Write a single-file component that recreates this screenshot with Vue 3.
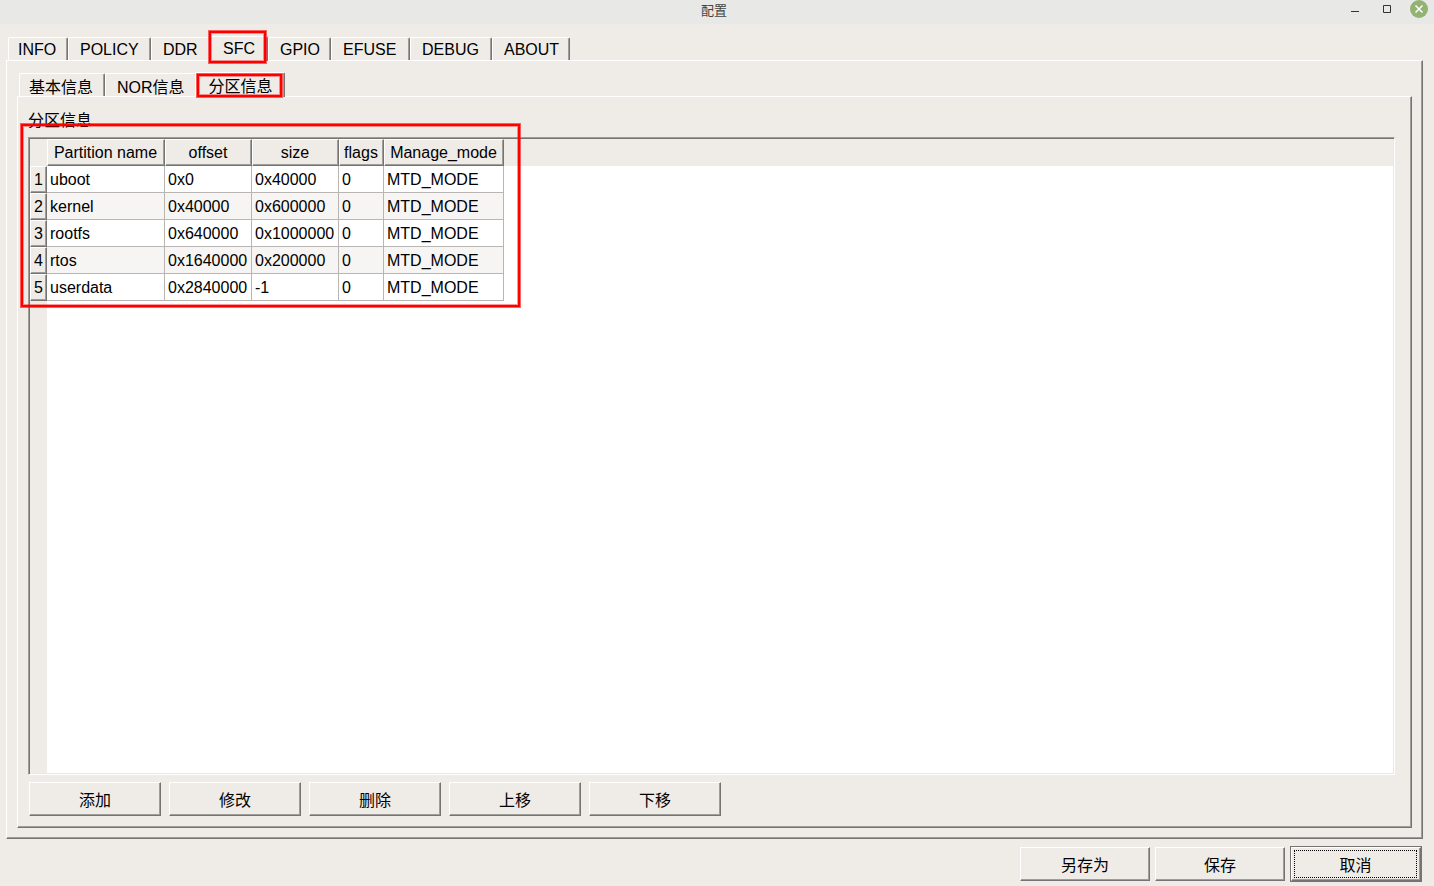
<script setup>
import { ref } from 'vue'

const tabs = [
  { label: 'INFO', width: 60 },
  { label: 'POLICY', width: 83 },
  { label: 'DDR', width: 60 },
  { label: 'SFC', width: 59 },
  { label: 'GPIO', width: 63 },
  { label: 'EFUSE', width: 79 },
  { label: 'DEBUG', width: 82 },
  { label: 'ABOUT', width: 78 },
]
const subTabs = ['基本信息', 'NOR信息', '分区信息']
const activeTab = ref('SFC')
const activeSub = ref('分区信息')

const columns = [
  { key: 'name', label: 'Partition name' },
  { key: 'offset', label: 'offset' },
  { key: 'size', label: 'size' },
  { key: 'flags', label: 'flags' },
  { key: 'mode', label: 'Manage_mode' },
]
const rows = [
  { name: 'uboot', offset: '0x0', size: '0x40000', flags: '0', mode: 'MTD_MODE' },
  { name: 'kernel', offset: '0x40000', size: '0x600000', flags: '0', mode: 'MTD_MODE' },
  { name: 'rootfs', offset: '0x640000', size: '0x1000000', flags: '0', mode: 'MTD_MODE' },
  { name: 'rtos', offset: '0x1640000', size: '0x200000', flags: '0', mode: 'MTD_MODE' },
  { name: 'userdata', offset: '0x2840000', size: '-1', flags: '0', mode: 'MTD_MODE' },
]
const actions = ['添加', '修改', '删除', '上移', '下移']
</script>

<template>
  <div class="window">
    <header class="titlebar">
      <h1 class="title">配置</h1>
      <div class="controls">
        <button class="control" type="button" aria-label="最小化">
          <svg width="18" height="18" viewBox="0 0 18 18"><path d="M5 11.5h8" stroke="#333" fill="none" /></svg>
        </button>
        <button class="control" type="button" aria-label="最大化">
          <svg width="18" height="18" viewBox="0 0 18 18"><path d="M5.5 5.5h7v7h-7z" stroke="#333" fill="none" /></svg>
        </button>
        <button class="control" type="button" aria-label="关闭">
          <svg width="18" height="18" viewBox="0 0 18 18">
            <circle cx="9" cy="9" r="9" fill="#92b372" />
            <path d="M5.5 5.5l7 7M12.5 5.5l-7 7" stroke="#fff" stroke-width="1.5" fill="none" />
          </svg>
        </button>
      </div>
    </header>

    <main class="body">
      <div class="tabs" role="tablist">
        <button
          v-for="t in tabs"
          :key="t.label"
          type="button"
          role="tab"
          class="tab"
          :class="{ active: t.label === activeTab }"
          :style="{ width: t.width + 'px' }"
          :aria-selected="t.label === activeTab"
          @click="activeTab = t.label"
        >{{ t.label }}<span v-if="t.label === 'SFC'" class="mark mark-tab"></span></button>
      </div>

      <section class="pane outer">
        <div class="tabs sub" role="tablist">
          <button
            v-for="t in subTabs"
            :key="t"
            type="button"
            role="tab"
            class="tab"
            :class="{ active: t === activeSub }"
            :aria-selected="t === activeSub"
            @click="activeSub = t"
          >{{ t }}<span v-if="t === '分区信息'" class="mark mark-sub"></span></button>
        </div>

        <section class="pane inner">
          <h2 id="partition-label" class="group-label">分区信息</h2>
          <div class="frame">
            <div class="viewport">
              <table class="grid" aria-labelledby="partition-label">
                <colgroup>
                  <col class="col-index" />
                  <col v-for="c in columns" :key="c.key" :class="'col-' + c.key" />
                </colgroup>
                <thead>
                  <tr>
                    <td class="corner"></td>
                    <th v-for="c in columns" :key="c.key" scope="col">{{ c.label }}</th>
                  </tr>
                </thead>
                <tbody>
                  <tr v-for="(r, i) in rows" :key="r.name">
                    <th scope="row">{{ i + 1 }}</th>
                    <td v-for="c in columns" :key="c.key">{{ r[c.key] }}</td>
                  </tr>
                </tbody>
              </table>
              <span class="mark mark-table"></span>
            </div>
          </div>
          <div class="actions">
            <button v-for="a in actions" :key="a" type="button" class="push">{{ a }}</button>
          </div>
        </section>
      </section>
    </main>

    <footer class="footer">
      <button type="button" class="push dialog">另存为</button>
      <button type="button" class="push dialog">保存</button>
      <div class="default">
        <button type="button" class="push dialog focused"><span class="focus">取消</span></button>
      </div>
    </footer>
  </div>
</template>

<style>
body {
  margin: 0;
  background: #efebe7;
}
</style>

<style scoped>
.window {
  --face: #efebe7;
  --mid: #9f9d9a;
  --dark: #767472;
  display: flex;
  flex-direction: column;
  min-height: 100vh;
  box-sizing: border-box;
  background: var(--face);
  color: #000;
  font: 16px/20px "Liberation Sans", "Noto Sans CJK SC", sans-serif;
}
.window *, .window *::before {
  box-sizing: border-box;
}
button {
  margin: 0;
  padding: 0;
  border: 0;
  background: none;
  color: inherit;
  font: inherit;
}

.titlebar {
  display: grid;
  grid-template-columns: 1fr auto 1fr;
  height: 24px;
  padding-right: 6px;
  background: #e8e8e7;
}
.title {
  grid-column: 2;
  margin: 0;
  color: #444;
  font: 13px/20px "Noto Sans CJK SC", sans-serif;
}
.controls {
  display: flex;
  justify-content: flex-end;
  gap: 14px;
}
.control {
  width: 18px;
  height: 18px;
}
.control svg {
  display: block;
}

.body {
  display: flex;
  flex: 1;
  flex-direction: column;
  padding: 12px 11px 0 6px;
}
.tabs {
  display: flex;
  align-items: flex-end;
  height: 24px;
}
.tab {
  position: relative;
  height: 23px;
  padding: 1px 11px 0;
  border: 1px solid;
  border-color: #fff var(--dark) transparent #fff;
  border-bottom: 0;
  border-radius: 2px 2px 0 0;
  box-shadow: inset -1px 0 var(--mid);
  background: var(--face);
  line-height: 16px;
  text-align: left;
  white-space: nowrap;
}
.tab:first-child {
  margin-left: 2px;
  padding-left: 9px;
}
.tab.active {
  z-index: 1;
  height: 25px;
  margin: 0 0 -1px -2px;
  padding: 0 11px 0 13px;
}
.sub .tab {
  padding-top: 5px;
}
.sub .tab.active {
  padding-top: 4px;
}

.pane {
  display: flex;
  flex: 1;
  flex-direction: column;
  border: 1px solid;
  border-color: #fff var(--dark) var(--dark) #fff;
  box-shadow: inset -1px -1px var(--mid);
}
.outer {
  padding: 11px 10px 10px;
}
.inner {
  padding: 14px 16px 11px 10px;
}
.group-label {
  margin: 0 0 6px;
  font-size: 16px;
  font-weight: normal;
  line-height: 20px;
}
.frame {
  display: flex;
  flex: 1;
  padding: 1px;
  border: 1px solid;
  border-color: var(--mid) #fff #fff var(--mid);
  box-shadow: inset 1px 1px var(--dark), inset -1px -1px #ebe8e4;
}
.viewport {
  position: relative;
  flex: 1;
  background:
    linear-gradient(var(--face), var(--face)) 0 0 / 100% 27px no-repeat,
    linear-gradient(var(--face), var(--face)) 0 0 / 17px 100% no-repeat,
    #fff;
}

.grid {
  width: 474px;
  table-layout: fixed;
  border-collapse: separate;
  border-spacing: 0;
}
.col-index { width: 17px; }
.col-name { width: 118px; }
.col-offset { width: 87px; }
.col-size { width: 87px; }
.col-flags { width: 45px; }
.col-mode { width: 120px; }
.grid th, .grid td {
  height: 27px;
  padding: 0;
  line-height: 25px;
  white-space: nowrap;
}
.grid th {
  border: 1px solid;
  border-color: #fff var(--dark) var(--dark) #fff;
  box-shadow: inset -1px -1px var(--mid);
  background: var(--face);
  font-weight: normal;
  text-align: center;
}
.grid thead th {
  padding-right: 1px;
}
.grid tbody td {
  padding-left: 3px;
  border: solid #b9b5b2;
  border-width: 0 1px 1px 0;
  background: #fff;
}
.grid tbody tr:nth-child(even) td {
  background: #f6f5f3;
}

.actions {
  display: flex;
  gap: 8px;
  margin-top: 7px;
  padding-left: 1px;
}
.push {
  width: 132px;
  height: 34px;
  padding-top: 4px;
  border: 1px solid;
  border-color: #fff var(--dark) var(--dark) #fff;
  box-shadow: inset -1px -1px var(--mid);
  text-align: center;
}
.dialog {
  width: 130px;
}
.footer {
  display: flex;
  align-items: center;
  justify-content: flex-end;
  gap: 5px;
  padding: 7px 12px 4px;
}
.default {
  display: flex;
  border: 1px solid var(--dark);
}
.focused {
  padding-top: 0;
}
.focus {
  display: block;
  margin: 2px 3px 3px 2px;
  padding-top: 3px;
  border: 1px dotted #000;
  line-height: 23px;
}

.mark {
  position: absolute;
  z-index: 2;
  border: 2px solid #f00;
  box-shadow: 0 0 0 1px rgba(255, 0, 0, 0.6), inset 0 0 0 1px rgba(255, 0, 0, 0.4);
  pointer-events: none;
}
.mark-tab {
  inset: -6px 1px -2px -1px;
}
.mark-sub {
  inset: 1px 2px 0 1px;
}
.mark-table {
  top: -15px;
  left: -9px;
  width: 499px;
  height: 183px;
}
</style>
